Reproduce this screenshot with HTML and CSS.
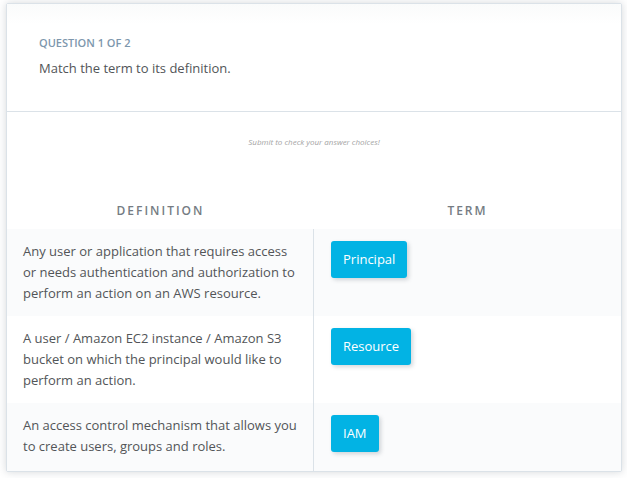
FILE: index.html
```html
<!DOCTYPE html>
<html lang="en">
<head>
<meta charset="utf-8">
<title>Question 1 of 2</title>
<link rel="stylesheet" href="styles.css">
</head>
<body>
<main class="card">
  <header class="question">
    <h1 class="question-count">QUESTION 1 OF 2</h1>
    <p class="question-text">Match the term to its definition.</p>
  </header>
  <p class="hint">Submit to check your answer choices!</p>
  <table class="match">
    <thead>
      <tr><th scope="col">DEFINITION</th><th scope="col">TERM</th></tr>
    </thead>
    <tbody>
      <tr>
        <td>Any user or application that requires access or needs authentication and authorization to perform an action on an AWS resource.</td>
        <td><button class="term" type="button">Principal</button></td>
      </tr>
      <tr>
        <td>A user / Amazon EC2 instance / Amazon S3 bucket on which the principal would like to perform an action.</td>
        <td><button class="term" type="button">Resource</button></td>
      </tr>
      <tr>
        <td>An access control mechanism that allows you to create users, groups and roles.</td>
        <td><button class="term" type="button">IAM</button></td>
      </tr>
    </tbody>
  </table>
</main>
</body>
</html>
```
FILE: styles.css
```css
* {
  box-sizing: border-box;
}

body {
  margin: 0;
  padding: 3px 5px 6px 6px;
  background: #fff;
  color: #525558;
  font-family: "Open Sans", sans-serif;
  font-size: 13px;
  line-height: 21px;
}

.card {
  border: 1px solid #dbe2e8;
  border-radius: 2px;
  background: #fff;
  box-shadow: 0 0 8px rgba(46, 61, 73, 0.2);
}

.question {
  padding: 32px;
  border-bottom: 1px solid #dbe2e8;
  background: linear-gradient(#fafbfb, #fff 20px);
}

.question-count {
  margin: 0 0 8px;
  color: #7d97ad;
  font-size: 11px;
  font-weight: 600;
  line-height: 14px;
}

.question-text {
  margin: 0;
}

.hint {
  margin: 24px 0 52px;
  color: #a4a4a4;
  font-size: 8px;
  font-style: italic;
  line-height: 12px;
  text-align: center;
}

.match {
  width: 100%;
  border-spacing: 0;
  table-layout: fixed;
}

.match th {
  padding: 0 0 8px;
  color: #757c83;
  font-size: 12px;
  font-weight: 600;
  letter-spacing: 2px;
}

.match td {
  padding: 12px 14px 12px 16px;
  vertical-align: top;
}

.match td:first-child {
  border-right: 1px solid #dbe2e8;
}

.match td:last-child {
  padding-left: 17px;
}

.match tbody tr:last-child td {
  padding-bottom: 14px;
}

.match tbody tr:nth-child(odd) {
  background: #fafbfc;
}

.term {
  display: block;
  padding: 8px 12px;
  border: 0;
  border-radius: 3px;
  background: #02b3e4;
  box-shadow: 2px 2px 4px rgba(46, 61, 73, 0.2);
  color: #fff;
  font: inherit;
}
```
